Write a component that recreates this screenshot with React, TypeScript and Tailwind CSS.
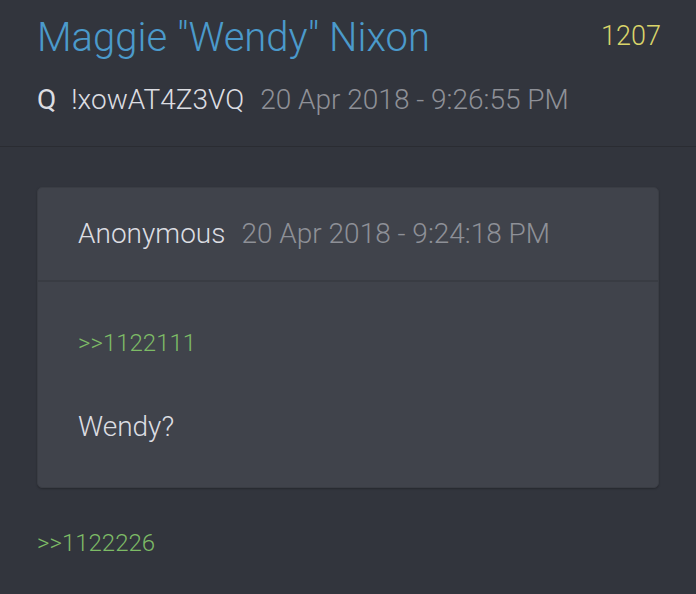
import { ReactNode } from 'react';

function Meta({ name, date }: { name: ReactNode; date: string }) {
	return (
		<div className="flex items-baseline gap-4 text-[28px] leading-[34px]">
			<span className="text-[#dcdde2]">{name}</span>
			<span className="text-[#8e9097]">{date}</span>
		</div>
	);
}

export default function App() {
	return (
		<div className="min-h-[594px] w-full bg-[#32353d] font-['Roboto',sans-serif] font-light">
			<header className="border-b border-[#2a2c32] px-[37px] pt-[14px] pb-[29px]">
				<div className="flex items-start justify-between">
					<h1 className="text-[40px] leading-[48px] text-[#4b9acb]">Maggie "Wendy" Nixon</h1>
					<span className="pt-[2px] -mr-[2px] text-[27px] text-[#d9d46a]">1207</span>
				</div>
				<div className="mt-[21px]">
					<Meta
						name={
							<>
								<span className="font-normal">Q</span>
								<span className="ml-[15px]">!xowAT4Z3VQ</span>
							</>
						}
						date="20 Apr 2018 - 9:26:55 PM"
					/>
				</div>
			</header>

			<section className="px-[37px] pt-[40px]">
				<div className="overflow-hidden rounded-[5px] border border-[#3a3d44] bg-[#40434b] shadow-[0_1px_2px_rgba(0,0,0,0.25)]">
					<div className="border-b-2 border-[#393c43] px-[40px] pt-[29px] pb-[29px]">
						<Meta name="Anonymous" date="20 Apr 2018 - 9:24:18 PM" />
					</div>
					<div className="px-[40px] pt-[46px] pb-[43px]">
						<p className="text-[24px] leading-[30px] text-[#7dbb66]">&gt;&gt;1122111</p>
						<p className="mt-[52px] text-[28px] leading-[34px] text-[#dcdde2]">Wendy?</p>
					</div>
				</div>
				<p className="mt-[40px] text-[24px] leading-[30px] text-[#7dbb66]">&gt;&gt;1122226</p>
			</section>
		</div>
	);
}
